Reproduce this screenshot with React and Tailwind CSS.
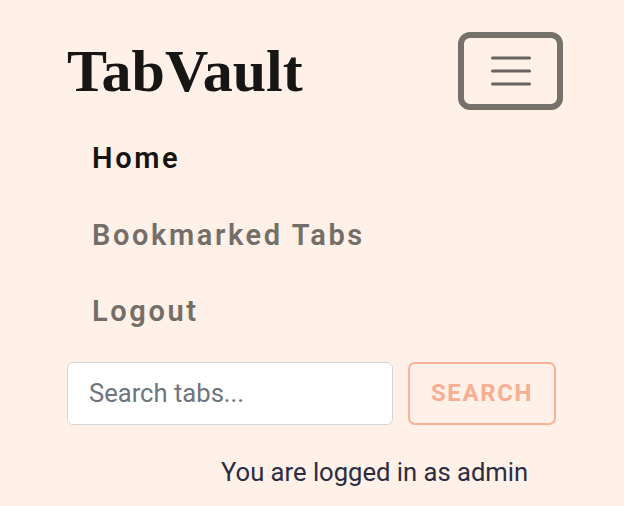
import { useState } from 'react';

const navLinks = [
  { label: 'Home', active: true },
  { label: 'Bookmarked Tabs', active: false },
  { label: 'Logout', active: false },
];

export default function App() {
  const [query, setQuery] = useState('');

  return (
    <div className="min-h-screen w-full bg-[#fff0e8] font-['Roboto',sans-serif]">
      {/* Navbar header */}
      <div className="flex items-center justify-between pl-[67px] pr-[61px] pt-[32px]">
        <a href="#" className="font-['Liberation_Serif',serif] text-[60px] font-bold leading-none text-[#181614]">
          TabVault
        </a>
        <button
          type="button"
          aria-label="Toggle navigation"
          className="flex h-[78px] w-[105px] items-center justify-center rounded-[12px] border-[6px] border-[#77716b]"
        >
          <svg width="40" height="30" viewBox="0 0 40 30" fill="none">
            <path d="M1.5 2h37M1.5 15h37M1.5 28h37" stroke="#69635e" strokeWidth="3" strokeLinecap="round" />
          </svg>
        </button>
      </div>

      {/* Nav links */}
      <ul className="mt-[10px] pl-[92px]">
        {navLinks.map((link) => (
          <li key={link.label}>
            <a
              href="#"
              className={`block text-[29px] font-semibold leading-[76.5px] tracking-[2.6px] ${
                link.active ? 'text-[#161412]' : 'text-[#746e68]'
              }`}
            >
              {link.label}
            </a>
          </li>
        ))}
      </ul>

      {/* Search form */}
      <form className="mt-[12px] flex items-center gap-[15px] pl-[67px]" onSubmit={(e) => e.preventDefault()}>
        <input
          type="search"
          value={query}
          onChange={(e) => setQuery(e.target.value)}
          placeholder="Search tabs..."
          className="h-[63px] w-[326px] rounded-[6px] border border-[#d3d6da] bg-white pl-[21px] text-[25.6px] text-[#212529] outline-none placeholder:text-[#6c757d]"
        />
        <button
          type="submit"
          className="h-[63px] w-[148px] rounded-[7px] border-[2.5px] border-[#f8b39a] text-[24px] font-bold tracking-[1.6px] text-[#f8ae93]"
        >
          SEARCH
        </button>
      </form>

      <p className="mt-[31px] pl-[221px] text-[25.6px] leading-[32px] text-[#2b2c41]">
        You are logged in as admin
      </p>
    </div>
  );
}
